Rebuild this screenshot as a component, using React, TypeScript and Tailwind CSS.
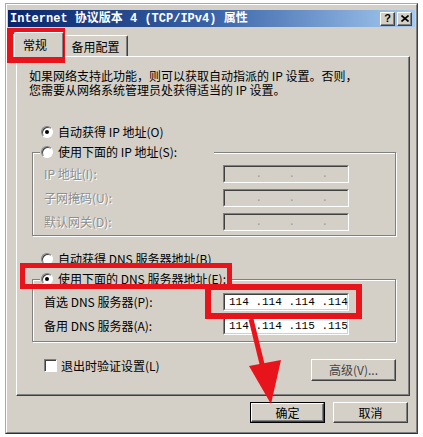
import React from "react";

function Radio({ checked }: { checked?: boolean }) {
  return (
    <span className="flex h-[12px] w-[12px] shrink-0 items-center justify-center rounded-full border border-t-[#808080] border-l-[#808080] border-r-white border-b-white bg-white shadow-[inset_1px_1px_0_#404040]">
      {checked && <span className="h-[4px] w-[4px] rounded-full bg-black" />}
    </span>
  );
}

function Field({ value, disabled }: { value: string; disabled?: boolean }) {
  return (
    <div className="h-[18px] w-[126px] border border-t-[#808080] border-l-[#808080] border-r-white border-b-white">
      <div
        className={
          disabled
            ? "flex h-full items-center whitespace-pre border border-t-[#404040] border-l-[#404040] border-r-[#d4d0c8] border-b-[#d4d0c8] bg-[#d4d0c8] pl-[4px] font-['Liberation_Mono',monospace] text-[11px] leading-none text-[#9a9a9a]"
            : "flex h-full items-center whitespace-pre border border-t-[#404040] border-l-[#404040] border-r-[#d4d0c8] border-b-[#d4d0c8] bg-white pl-[4px] font-['Liberation_Mono',monospace] text-[11px] leading-none text-black"
        }
      >
        {value}
      </div>
    </div>
  );
}

function Row({ label, value, disabled }: { label: string; value: string; disabled?: boolean }) {
  return (
    <div className="flex h-[18px] items-center">
      <div
        className={
          disabled
            ? "w-[179px] text-[12px] leading-[18px] text-[#8e8e8e] [text-shadow:1px_1px_0_#ffffff]"
            : "w-[179px] text-[12px] leading-[18px] text-black"
        }
      >
        {label}
      </div>
      <Field value={value} disabled={disabled} />
    </div>
  );
}

function Btn({ children, w, def }: { children: React.ReactNode; w: string; def?: boolean }) {
  if (def) {
    return (
      <div className={`${w} h-[21px] border border-black`}>
        <div className="flex h-full items-center justify-center border border-t-white border-l-white border-r-[#404040] border-b-[#404040] bg-[#d4d0c8] text-[12px] leading-none text-black shadow-[inset_-1px_-1px_0_#808080]">
          {children}
        </div>
      </div>
    );
  }
  return (
    <div className={`${w} flex items-center justify-center border border-t-white border-l-white border-r-[#404040] border-b-[#404040] bg-[#d4d0c8] text-[12px] leading-none text-black shadow-[inset_-1px_-1px_0_#808080]`}>
      {children}
    </div>
  );
}

export default function App() {
  return (
    <div className="relative h-[437px] w-[423px] overflow-hidden bg-white pl-[5px] pt-[3px] font-['Noto_Sans_CJK_SC',sans-serif]">
      {/* dialog */}
      <div className="h-[431px] w-[413px] border border-t-[#a8a8a8] border-l-[#a8a8a8] border-r-[#404040] border-b-[#303030] bg-[#d4d0c8]">
        <div className="flex h-full flex-col border border-t-white border-l-white border-r-[#808080] border-b-[#808080] px-[1px] pt-[5px]">
          {/* title bar */}
          <div className="flex h-[17px] w-[407px] items-center justify-between bg-gradient-to-r from-[#0a246a] via-[#3a64a8] to-[#a6caf0] pl-[2px] pr-[3px]">
            <span className="whitespace-pre font-['Liberation_Mono','Noto_Sans_CJK_SC',monospace] text-[12px] font-bold leading-none text-white">
              Internet 协议版本 4 (TCP/IPv4) 属性
            </span>
            <div className="flex gap-[2px]">
              <div className="flex h-[14px] w-[15px] items-center justify-center border border-t-white border-l-white border-r-[#404040] border-b-[#404040] bg-[#d4d0c8] font-['Liberation_Sans',sans-serif] text-[11px] font-bold leading-none text-black shadow-[inset_-1px_-1px_0_#808080]">
                ?
              </div>
              <div className="flex h-[14px] w-[15px] items-center justify-center border border-t-white border-l-white border-r-[#404040] border-b-[#404040] bg-[#d4d0c8] shadow-[inset_-1px_-1px_0_#808080]">
                <svg width="8" height="7" viewBox="0 0 8 7">
                  <path d="M0.5 0.5 L7.5 6.5 M7.5 0.5 L0.5 6.5" stroke="#000" strokeWidth="1.6" />
                </svg>
              </div>
            </div>
          </div>

          {/* tabs */}
          <div className="ml-[6px] mt-[5px] flex h-[24px] items-end">
            <div className="relative z-10 -mb-[1px] flex h-[25px] w-[50px] items-center rounded-t-[2px] border-l border-t border-r border-t-white border-l-white border-r-[#404040] bg-[#d4d0c8] pb-[1px] pl-[8px] text-[12px] leading-none text-black shadow-[inset_-1px_0_0_#808080]">
              常规
            </div>
            <div className="flex h-[21px] w-[64px] items-center justify-center rounded-t-[2px] border-t border-r border-t-white border-r-[#404040] bg-[#d4d0c8] pt-[2px] text-[12px] leading-none text-black shadow-[inset_-1px_0_0_#808080]">
              备用配置
            </div>
          </div>

          {/* panel */}
          <div className="ml-[8px] h-[340px] w-[394px] border border-t-white border-l-white border-r-[#404040] border-b-[#404040] bg-[#d4d0c8] shadow-[inset_-1px_-1px_0_#808080]">
            <p className="whitespace-pre pl-[12px] pt-[12px] text-[12px] leading-[14px] text-black">
              如果网络支持此功能，则可以获取自动指派的 IP 设置。否则，
              <br />
              您需要从网络系统管理员处获得适当的 IP 设置。
            </p>

            <div className="ml-[24px] mt-[27px] flex h-[16px] items-center gap-[5px] text-[12px] leading-none text-black">
              <Radio checked />
              <span className="whitespace-pre">自动获得 IP 地址(O)</span>
            </div>

            <fieldset className="ml-[15px] mt-[4px] w-[364px] border border-[#808080] px-[0px] pb-[4px] pt-[5px] shadow-[inset_1px_1px_0_#ffffff,1px_1px_0_#ffffff]">
              <legend className="ml-[7px] flex h-[16px] w-[174px] items-center gap-[5px] bg-[#d4d0c8] pl-[1px] text-[12px] leading-none text-black">
                <Radio />
                <span className="whitespace-pre">使用下面的 IP 地址(S):</span>
              </legend>
              <div className="flex flex-col gap-[6px] pl-[11px]">
                <Row label="IP 地址(I):" value="    .    .    ." disabled />
                <Row label="子网掩码(U):" value="    .    .    ." disabled />
                <Row label="默认网关(D):" value="    .    .    ." disabled />
              </div>
            </fieldset>

            <div className="ml-[24px] mt-[15px] flex h-[16px] items-center gap-[5px] text-[12px] leading-none text-black">
              <Radio />
              <span className="whitespace-pre">自动获得 DNS 服务器地址(B)</span>
            </div>

            <fieldset className="ml-[15px] mt-[4px] w-[364px] border border-[#808080] px-[0px] pb-[6px] pt-[6px] shadow-[inset_1px_1px_0_#ffffff,1px_1px_0_#ffffff]">
              <legend className="ml-[7px] flex h-[16px] w-[192px] items-center gap-[5px] bg-[#d4d0c8] pl-[1px] text-[12px] leading-none text-black">
                <Radio checked />
                <span className="whitespace-pre">使用下面的 DNS 服务器地址(E):</span>
              </legend>
              <div className="flex flex-col gap-[6px] pl-[11px]">
                <Row label="首选 DNS 服务器(P):" value="114 .114 .114 .114" />
                <Row label="备用 DNS 服务器(A):" value="114 .114 .115 .115" />
              </div>
            </fieldset>

            <div className="ml-[27px] mt-[17px] flex w-[352px] items-start justify-between">
              <div className="flex h-[13px] items-center gap-[4px] text-[12px] leading-none text-black">
                <span className="h-[13px] w-[13px] border border-t-[#808080] border-l-[#808080] border-r-white border-b-white bg-white shadow-[inset_1px_1px_0_#404040]" />
                <span className="whitespace-pre">退出时验证设置(L)</span>
              </div>
              <div className="flex h-[22px] w-[85px] items-center justify-center border border-t-white border-l-white border-r-[#404040] border-b-[#404040] bg-[#d4d0c8] text-[12px] leading-none text-[#444] shadow-[inset_-1px_-1px_0_#808080]">
                高级(V)...
              </div>
            </div>
          </div>

          {/* bottom buttons */}
          <div className="mt-[6px] flex justify-end gap-[8px] pr-[7px]">
            <Btn w="w-[75px]" def>
              确定
            </Btn>
            <div className="h-[21px]">
              <Btn w="w-[75px] h-[21px]">取消</Btn>
            </div>
          </div>
        </div>
      </div>

      {/* red annotations */}
      <svg className="pointer-events-none absolute left-0 top-0" width="423" height="437" viewBox="0 0 423 437">
        <rect x="10" y="31" width="52" height="29" fill="none" stroke="#e8141b" strokeWidth="6" />
        <rect x="22.5" y="265.5" width="207" height="21" fill="none" stroke="#e8141b" strokeWidth="5" />
        <rect x="208" y="287" width="151" height="29" fill="none" stroke="#e8141b" strokeWidth="6" />
        <line x1="251" y1="319" x2="263" y2="368" stroke="#e8141b" strokeWidth="5" />
        <polygon points="249,366 281,360 271,404" fill="#e8141b" />
      </svg>
    </div>
  );
}
